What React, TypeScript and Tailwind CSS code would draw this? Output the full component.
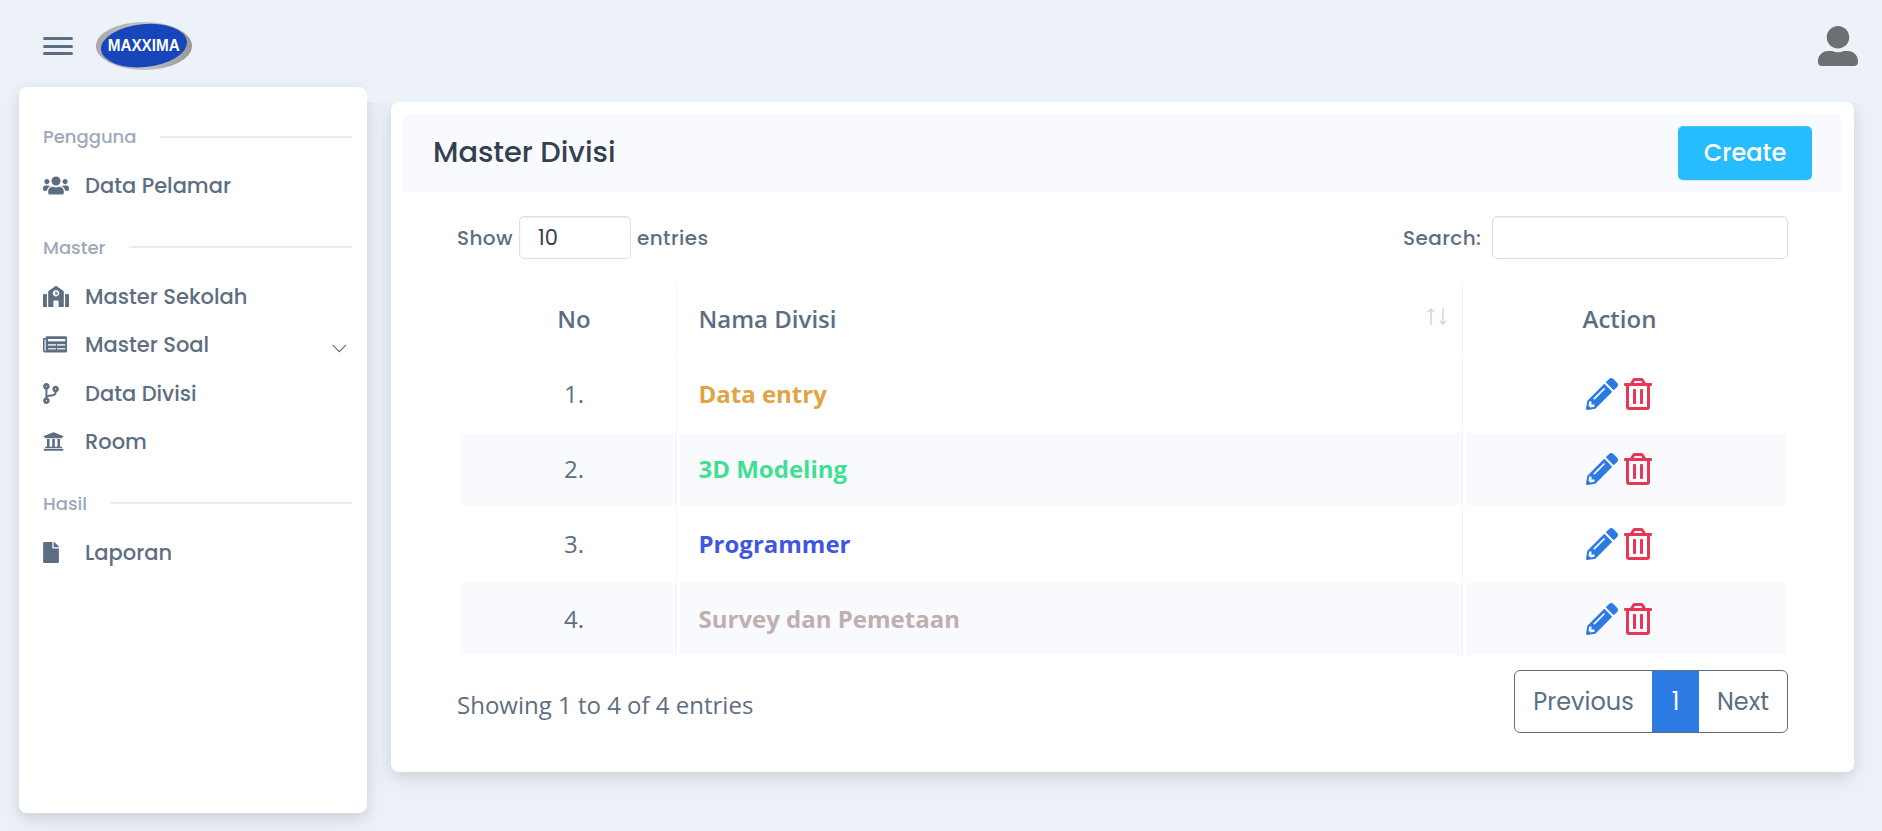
import React from "react";
import {
  FaUsers,
  FaSchool,
  FaCodeBranch,
  FaUniversity,
  FaFile,
  FaPencilAlt,
  FaRegTrashAlt,
  FaUserAlt,
} from "react-icons/fa";

function Logo() {
  return (
    <svg width="96" height="48" viewBox="0 0 96 48">
      <defs>
        <linearGradient id="rim" x1="0" y1="0" x2="1" y2="0">
          <stop offset="0" stopColor="#a9a9a9" />
          <stop offset="0.5" stopColor="#c2c2c2" />
          <stop offset="1" stopColor="#989898" />
        </linearGradient>
      </defs>
      <ellipse cx="48" cy="24" rx="48" ry="24" fill="url(#rim)" />
      <ellipse cx="48" cy="23.6" rx="43.2" ry="21.5" fill="#1745bb" transform="rotate(-5.5 48 23.6)" />
      <text
        x="47.7"
        y="29.4"
        textAnchor="middle"
        textLength="72"
        lengthAdjust="spacingAndGlyphs"
        fontFamily="Liberation Sans"
        fontWeight="700"
        fontSize="16"
        fill="#fff"
      >
        MAXXIMA
      </text>
    </svg>
  );
}

function NewspaperIcon() {
  return (
    <svg width="24" height="17" viewBox="0 0 24 17">
      <path
        fill="currentColor"
        d="M3.9 0.3H22.8A1.2 1.2 0 0 1 24 1.5V15.2A1.4 1.4 0 0 1 22.6 16.6H2A2 2 0 0 1 0 14.6V3.2A1.2 1.2 0 0 1 1.2 2H2.7V1.5A1.2 1.2 0 0 1 3.9 0.3Z"
      />
      <path d="M1.6 3.6H2.7V14.4A0.55 0.55 0 0 1 1.6 14.4Z" fill="#fff" />
      <path d="M5 3H22.3V5.3H5Z" fill="#fff" />
      <path d="M5 8H12.9V9.7H5ZM14 8H22.3V9.7H14ZM5 11.9H12.9V13.5H5ZM14 11.9H22.3V13.5H14Z" fill="#fff" fillOpacity="0.75" />
    </svg>
  );
}

function Section({ label }: { label: string }) {
  return (
    <div className="flex h-[30px] items-center gap-6 pr-[15px] text-[#9da9bb]">
      <span className="text-[18px] font-medium">{label}</span>
      <span className="h-[2px] flex-1 bg-[#ebebeb]" />
    </div>
  );
}

function Item({ icon, label, arrow }: { icon: React.ReactNode; label: string; arrow?: boolean }) {
  return (
    <a className="flex h-[48.5px] items-center pr-5 text-[#5e6e82]">
      <span className="flex w-[42px] shrink-0">{icon}</span>
      <span className="flex-1 text-[21px] font-medium">{label}</span>
      {arrow && (
        <svg width="15" height="9" viewBox="0 0 15 9" className="mt-2" fill="none" stroke="currentColor" strokeWidth="1.1">
          <path d="M0.5 0.8 7.3 7.6 14.1 0.8" />
        </svg>
      )}
    </a>
  );
}

const rows = [
  { name: "Data entry", color: "text-[#dfa443]" },
  { name: "3D Modeling", color: "text-[#41df93]" },
  { name: "Programmer", color: "text-[#3f57df]" },
  { name: "Survey dan Pemetaan", color: "text-[#bfb0b0]" },
];

export default function App() {
  return (
    <div className="flex h-[831px] flex-col overflow-hidden bg-[#edf2f9] font-[Poppins,Inter,sans-serif]">
      <header className="flex h-[87px] shrink-0 items-start pl-[43px] pr-6">
        <div className="mt-[37px] flex w-[30px] flex-col">
          <span className="h-[3px] rounded-full bg-[#5e6e82]" />
          <span className="mt-[5px] h-[3px] rounded-full bg-[#5e6e82]" />
          <span className="mt-1 h-[3px] rounded-full bg-[#5e6e82]" />
        </div>
        <div className="ml-[23px] mt-[22px]">
          <Logo />
        </div>
        <FaUserAlt className="ml-auto mt-[26px] text-[40px] text-[#6e6f73]" />
      </header>

      <div className="flex flex-1 items-start pl-[19px]">
        <nav className="h-[726px] w-[348px] shrink-0 rounded-lg bg-white pl-6 pt-[34.5px] shadow-[0_8px_24px_0_rgba(65,69,88,0.1),0_4px_12px_0_rgba(0,0,0,0.08)]">
          <Section label="Pengguna" />
          <div className="pb-3 pt-[9.5px]">
            <Item icon={<FaUsers className="h-[21px] w-[26px]" />} label="Data Pelamar" />
          </div>
          <div className="pt-[10.5px]">
            <Section label="Master" />
          </div>
          <div className="pb-[13px] pt-[10px]">
            <Item icon={<FaSchool className="h-[21px] w-[26px]" />} label="Master Sekolah" />
            <Item icon={<NewspaperIcon />} label="Master Soal" arrow />
            <Item icon={<FaCodeBranch className="h-[21px] w-[16px]" />} label="Data Divisi" />
            <Item icon={<FaUniversity className="h-[21px] w-[21px]" />} label="Room" />
          </div>
          <div className="pt-[9px]">
            <Section label="Hasil" />
          </div>
          <div className="pt-[10px]">
            <Item icon={<FaFile className="h-[21px] w-[16px]" />} label="Laporan" />
          </div>
        </nav>

        <div className="flex flex-1 flex-col">
          <div className="relative z-10 h-[15px] bg-[#edf2f9]" />
          <main className="ml-6 h-[670px] w-[1463px] rounded-lg bg-white p-3 shadow-[0_8px_24px_0_rgba(65,69,88,0.1),0_4px_12px_0_rgba(0,0,0,0.08)]">
            <div className="flex h-[78px] items-center justify-between rounded-t-lg bg-[#f9fafd] px-[30px]">
              <h5 className="pb-0.5 text-[28.8px] font-medium leading-none text-[#344050]">Master Divisi</h5>
              <button className="h-[54px] w-[134px] rounded-[5px] bg-[#27bcfd] text-[24px] font-medium text-white shadow-[inset_0_1px_0_rgba(255,255,255,0.15),0_1px_1px_rgba(0,0,0,0.075)]">
                Create
              </button>
            </div>

            <div className="mt-6 flex h-[43px] items-center pl-[54px] pr-[54px] text-[20px] text-[#5e6e82]">
              <span className="w-[62px] font-medium tracking-[0.02em]">Show</span>
              <span className="flex h-[43px] w-[112px] items-center rounded-[5px] border border-[#d8e2ef] pl-[18px] text-[21px] text-[#344050] shadow-[inset_0_1px_2px_rgba(0,0,0,0.075)]">
                10
              </span>
              <span className="ml-[6px] font-medium tracking-[0.02em]">entries</span>
              <span className="ml-auto w-[89px] font-medium tracking-[0.02em]">Search:</span>
              <span className="h-[43px] w-[296px] rounded-[5px] border border-[#d8e2ef] shadow-[inset_0_1px_2px_rgba(0,0,0,0.075)]" />
            </div>

            <div className="ml-[57px] mt-6 flex w-[1325px] flex-col gap-[3px] font-['Open_Sans',sans-serif] text-[24px] text-[#5e6e82]">
              <div className="grid h-[72px] grid-cols-[217px_783px_319px] gap-x-[3px] font-semibold">
                <div className="flex items-center justify-center border-r border-[#edf2f9] pl-3">No</div>
                <div className="flex items-center justify-between border-r border-[#edf2f9] pl-[18.5px] pr-[14px]">
                  <span>Nama Divisi</span>
                  <svg width="21" height="17" viewBox="0 0 21 17" className="-mt-1.5" fill="none" stroke="#d3d8de" strokeWidth="1.6">
                    <path d="M4 17V1.2M0.7 4.3 4 1l3.3 3.3M16 0v15.8M12.7 12.7 16 16l3.3-3.3" />
                  </svg>
                </div>
                <div className="flex items-center justify-center pr-3">Action</div>
              </div>
              {rows.map((r, i) => {
                const bg = i % 2 ? "bg-[#f9fafd]" : "";
                return (
                  <div key={r.name} className="grid h-[72px] grid-cols-[217px_783px_319px] gap-x-[3px]">
                    <div className={`flex items-center justify-center border-r border-[#edf2f9] pl-3 ${bg}`}>{i + 1}.</div>
                    <div className={`flex items-center border-r border-[#edf2f9] pl-[18.5px] font-bold ${bg} ${r.color}`}>
                      {r.name}
                    </div>
                    <div className={`flex items-center gap-[6px] pl-[120px] ${bg}`}>
                      <FaPencilAlt className="h-8 w-8 text-[#2c7be5]" />
                      <FaRegTrashAlt className="h-8 w-7 text-[#e63757]" />
                    </div>
                  </div>
                );
              })}
            </div>

            <div className="mt-[15px] flex justify-between pl-[54px] pr-[54px] text-[24px] text-[#5e6e82]">
              <span className="mt-[18px] font-['Open_Sans',sans-serif] leading-[33px]">Showing 1 to 4 of 4 entries</span>
              <div className="flex h-[63px] w-[274px] overflow-hidden rounded-[6px] border border-[#5e6e82]">
                <span className="flex w-[137px] items-center justify-center">Previous</span>
                <span className="-my-px flex w-[47px] items-center justify-center bg-[#2c7be5] text-white">1</span>
                <span className="flex flex-1 items-center justify-center">Next</span>
              </div>
            </div>
          </main>
        </div>
      </div>
    </div>
  );
}
